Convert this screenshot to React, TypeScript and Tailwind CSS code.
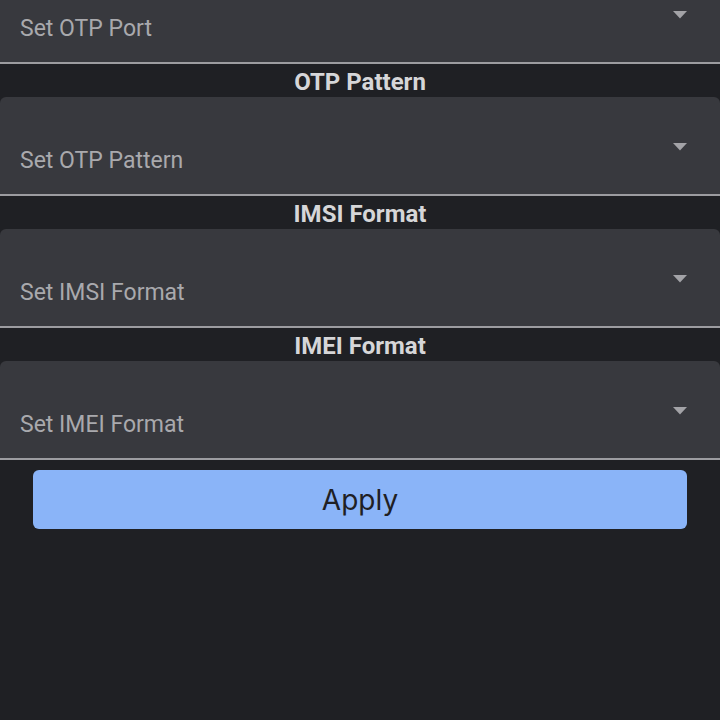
const fields = [
  { label: '', placeholder: 'Set OTP Port' },
  { label: 'OTP Pattern', placeholder: 'Set OTP Pattern' },
  { label: 'IMSI Format', placeholder: 'Set IMSI Format' },
  { label: 'IMEI Format', placeholder: 'Set IMEI Format' },
];

function SelectField({ placeholder }: { placeholder: string }) {
  return (
    <div className="relative h-[99px] rounded-t-[6px] bg-[#38393e] border-b-2 border-[#9c9ca0]">
      <div className="absolute left-[20px] top-[50px] text-[23px] leading-[28px] text-[#a9a9ad]">
        {placeholder}
      </div>
      <svg
        className="absolute right-[33px] top-[46px]"
        width="14"
        height="8"
        viewBox="0 0 14 8"
      >
        <path d="M0 0h14L7 7.5z" fill="#a3a3a7" />
      </svg>
    </div>
  );
}

export default function App() {
  return (
    <div
      className="h-[720px] w-[720px] overflow-hidden bg-[#1f2024]"
      style={{ fontFamily: 'Roboto, "Noto Sans", sans-serif' }}
    >
      <div className="-mt-[35px] flex flex-col">
        {fields.map((f) => (
          <div key={f.placeholder} className="flex flex-col">
            {f.label && (
              <div className="h-[33px] pt-[2px] flex items-center justify-center text-[24px] font-bold text-[#d6d6d8]">
                {f.label}
              </div>
            )}
            <SelectField placeholder={f.placeholder} />
          </div>
        ))}
        <div className="px-[33px] pt-[10px]">
          <button
            className="w-full h-[59px] rounded-[6px] bg-[#8ab4f8] text-[28px] text-[#1f2024] flex items-center justify-center"
            style={{ fontFamily: 'Inter, "Open Sans", sans-serif' }}
          >
            Apply
          </button>
        </div>
      </div>
    </div>
  );
}
